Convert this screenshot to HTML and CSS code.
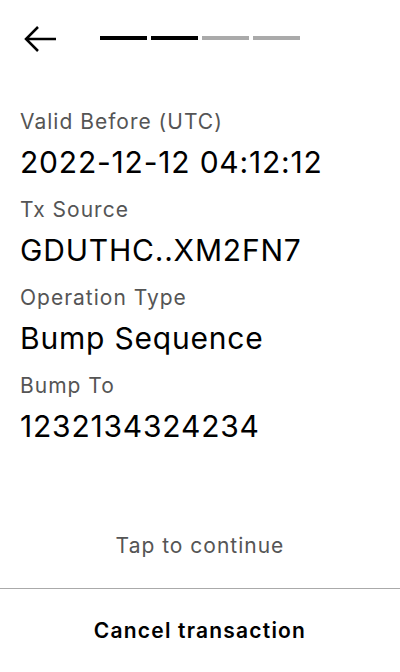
FILE: index.html
```html
<!DOCTYPE html>
<html>
<head>
<meta charset="utf-8">
<link rel="stylesheet" href="styles.css">
</head>
<body>
<div class="screen">
  <header class="header">
    <svg class="back" width="34" height="28" viewBox="0 0 34 28">
      <path d="M33 14H3M15 2L3 14L15 26" fill="none" stroke="#000" stroke-width="2.5"/>
    </svg>
    <div class="steps">
      <span class="step on"></span><span class="step on"></span><span class="step"></span><span class="step"></span>
    </div>
  </header>
  <main class="content">
    <div class="label">Valid Before (UTC)</div>
    <div class="value">2022-12-12 04:12:12</div>
    <div class="label">Tx Source</div>
    <div class="value">GDUTHC..XM2FN7</div>
    <div class="label">Operation Type</div>
    <div class="value">Bump Sequence</div>
    <div class="label">Bump To</div>
    <div class="value">1232134324234</div>
  </main>
  <div class="tap">Tap to continue</div>
  <footer class="footer">Cancel transaction</footer>
</div>
</body>
</html>
```
FILE: styles.css
```css
html, body { margin: 0; padding: 0; background: #fff; }
body { font-family: Inter, "Noto Sans", sans-serif; color: #000; }
.screen { height: 672px; display: flex; flex-direction: column; }
.header { height: 78px; display: flex; align-items: center; padding-left: 23px; box-sizing: border-box; }
.back { display: block; margin-top: 0; }
.steps { display: flex; gap: 4px; margin-left: 43px; margin-top: -2px; }
.step { width: 47px; height: 4px; background: #aaa; }
.step.on { background: #000; }
.content { padding: 30px 20px 0; flex: 1; }
.label { font-size: 21px; letter-spacing: 1px; line-height: 28px; color: #555; }
.value { font-size: 30px; letter-spacing: 0.8px; line-height: 44px; padding-top: 4px; margin-bottom: 12px; }
.tap { text-align: center; font-size: 21px; letter-spacing: 1px; color: #555; line-height: 28px; padding-bottom: 28px; }
.footer { border-top: 1px solid #aaa; height: 83px; display: flex; align-items: center; justify-content: center; font-size: 21px; letter-spacing: 1.2px; font-weight: 600; }
```
